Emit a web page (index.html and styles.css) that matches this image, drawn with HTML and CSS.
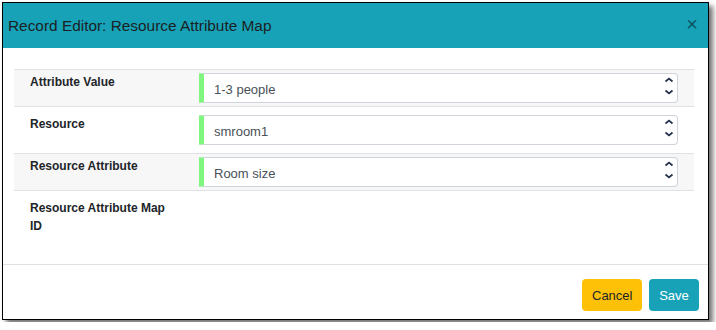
FILE: index.html
```html
<!DOCTYPE html>
<html lang="en">
<head>
    <meta charset="UTF-8">
    <title>Record Editor</title>
    <link rel="stylesheet" href="styles.css">
</head>
<body>
    <div class="modal">
        <div class="modal-header">
            <h5 class="modal-title">Record Editor: Resource Attribute Map</h5>
            <button class="close" aria-label="Close">&times;</button>
        </div>

        <div class="modal-body">
            <table class="record-table">
                <tr class="striped">
                    <td class="field-label">Attribute Value</td>
                    <td class="field-value">
                        <div class="picker"><span>1-3 people</span>
                            <svg class="spin" width="10" height="18" viewBox="0 0 10 18"><path d="M1.5 4.5 L5 1.5 L8.5 4.5 M1.5 13.5 L5 16.5 L8.5 13.5" fill="none" stroke="#23304a" stroke-width="1.7"/></svg>
                        </div>
                    </td>
                </tr>
                <tr class="tall">
                    <td class="field-label">Resource</td>
                    <td class="field-value">
                        <div class="picker"><span>smroom1</span>
                            <svg class="spin" width="10" height="18" viewBox="0 0 10 18"><path d="M1.5 4.5 L5 1.5 L8.5 4.5 M1.5 13.5 L5 16.5 L8.5 13.5" fill="none" stroke="#23304a" stroke-width="1.7"/></svg>
                        </div>
                    </td>
                </tr>
                <tr class="striped">
                    <td class="field-label">Resource Attribute</td>
                    <td class="field-value">
                        <div class="picker"><span>Room size</span>
                            <svg class="spin" width="10" height="18" viewBox="0 0 10 18"><path d="M1.5 4.5 L5 1.5 L8.5 4.5 M1.5 13.5 L5 16.5 L8.5 13.5" fill="none" stroke="#23304a" stroke-width="1.7"/></svg>
                        </div>
                    </td>
                </tr>
                <tr class="last">
                    <td class="field-label">Resource Attribute Map ID</td>
                    <td class="field-value"></td>
                </tr>
            </table>
        </div>

        <div class="modal-footer">
            <button class="btn btn-cancel">Cancel</button>
            <button class="btn btn-save">Save</button>
        </div>
    </div>
</body>
</html>
```

FILE: styles.css
```css
* { box-sizing: border-box; margin: 0; padding: 0; }
body { background: #fff; padding: 2px; font-family: "Liberation Sans", Arial, sans-serif; color: #212529; }

.modal { width: 707px; height: 318px; border: 1px solid #000; background: #fff; box-shadow: 4px 4px 5px rgba(0,0,0,0.55); display: flex; flex-direction: column; }

.modal-header { height: 45px; background: #17a2b8; display: flex; align-items: center; justify-content: space-between; padding: 0 10px 0 5px; }
.modal-title { font-family: "Liberation Sans", Arial, sans-serif; font-weight: 400; font-size: 15.4px; color: #1b1f23; padding-top: 1px; }
.close { background: none; border: none; font-family: "Liberation Sans", sans-serif; font-size: 20px; line-height: 1; color: rgba(0,0,0,0.5); cursor: pointer; margin-top: -3px; }

.modal-body { height: 216px; padding: 21px 14px 0 11px; }
.record-table { width: 680px; border-collapse: collapse; }
.record-table tr { border-top: 1px solid #dee2e6; }
.record-table tr.striped { background: #f7f7f7; }
.record-table td { padding: 3px 0; vertical-align: top; }
.record-table tr.tall td { padding: 8px 0; }
.record-table tr.last td { padding-top: 8px; }

.field-label { width: 185px; padding-left: 16px !important; padding-right: 26px !important; font-size: 12px; font-weight: bold; line-height: 18px; }
.field-value { padding-right: 16px !important; }

.picker { height: 30px; background: #fff; border: 1px solid #ced4da; border-left: 5px solid #80f580; border-radius: 1px 4px 4px 1px; display: flex; align-items: center; justify-content: space-between; padding: 2px 3px 0 10px; font-size: 13px; color: #495057; }
.spin { display: block; margin-top: -6px; }

.modal-footer { flex: 1; border-top: 1px solid #dee2e6; display: flex; justify-content: flex-end; align-items: flex-start; gap: 7px; padding: 14px 9px 0 0; }
.btn { height: 32px; padding: 0 10px; border: none; border-radius: 4px; font-family: "Liberation Sans", sans-serif; font-size: 13px; cursor: pointer; }
.btn-cancel { width: 60px; background: #ffc107; color: #212529; }
.btn-save { width: 50px; background: #17a2b8; color: #fff; }
```
